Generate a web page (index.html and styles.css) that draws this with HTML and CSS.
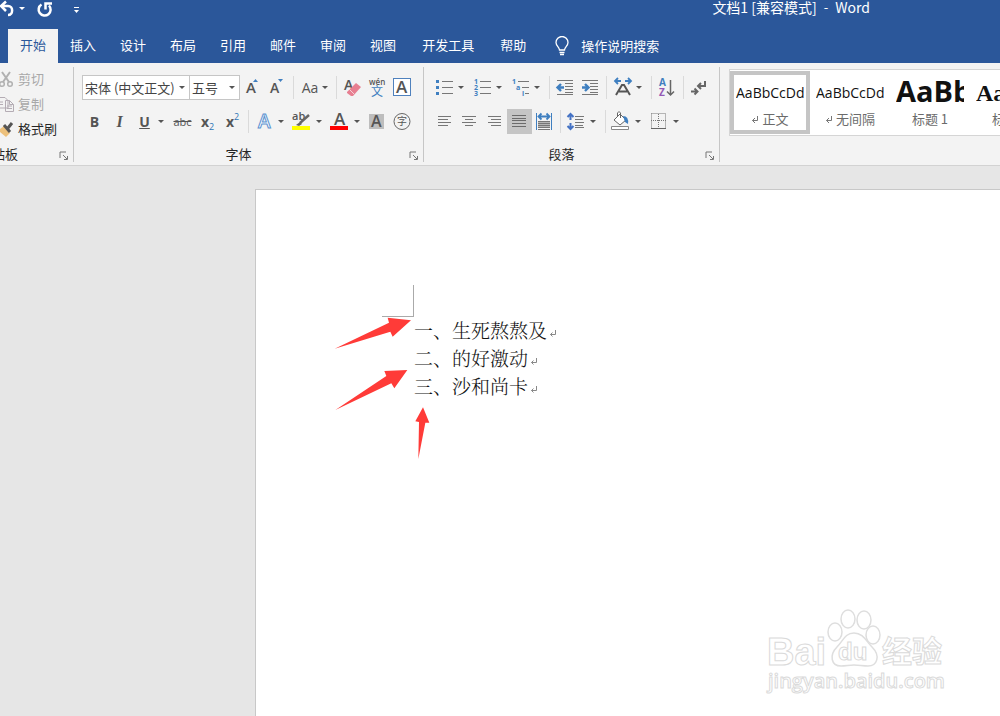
FILE: index.html
```
<!DOCTYPE html>
<html lang="zh-CN">
<head>
<meta charset="utf-8">
<title>文档1 [兼容模式] - Word</title>
<link rel="stylesheet" href="styles.css">
</head>
<body>
<header class="titlebar">
  <div class="quick">
    <button class="qbtn" aria-label="撤消"><svg width="34" height="20" viewBox="0 0 34 20"><path d="M6 1.500 1 6l5 5M1 6h7c5.500 0 5.500 9 0 9" fill="none" stroke="#fff" stroke-width="2.500"/><path d="M19 7h6l-3 3z" fill="#fff"/></svg></button>
    <button class="qbtn" aria-label="重复"><svg width="22" height="20" viewBox="0 0 22 20"><path d="M7.500 4.500A6 6 0 1 0 15 5.500M11.500 9.500V3.500H18" fill="none" stroke="#fff" stroke-width="2.500"/></svg></button>
    <button class="qbtn qmore" aria-label="自定义快速访问工具栏"><svg width="10" height="20" viewBox="0 0 10 20"><path d="M2 7.500h5" stroke="#fff"/><path d="M2 10h5l-2.500 3z" fill="#fff"/></svg></button>
  </div>
  <h1 class="title"><span>文档1 [兼容模式]</span><span>-</span><span>Word</span></h1>
</header>
<nav class="tabs">
  <button class="tab active">开始</button>
  <button class="tab">插入</button>
  <button class="tab">设计</button>
  <button class="tab">布局</button>
  <button class="tab">引用</button>
  <button class="tab">邮件</button>
  <button class="tab">审阅</button>
  <button class="tab">视图</button>
  <button class="tab wide">开发工具</button>
  <button class="tab">帮助</button>
  <label class="tell" for="tell"><svg width="16" height="20" viewBox="0 0 16 20"><path d="M5.500 14c0-3-3.500-4-3.500-7.500a6 6 0 0 1 12 0c0 3.500-3.500 4.500-3.500 7.500zM5.500 16.500h5M6 18.500h4" fill="none" stroke="#fff" stroke-width="1.300"/></svg></label>
  <input id="tell" class="tell-input" type="text" placeholder="操作说明搜索" aria-label="操作说明搜索">
</nav>
<section class="ribbon">
  <div class="group clipboard">
    <div class="clip-list">
      <button class="clip off"><svg width="15" height="18" viewBox="0 0 15 18"><path d="M2 2l7 10M10 2 3 12" stroke="#b1b1b1" stroke-width="2"/><circle cx="2" cy="14" r="2.300" fill="none" stroke="#b1b1b1" stroke-width="1.500"/><circle cx="10" cy="14" r="2.300" fill="none" stroke="#b1b1b1" stroke-width="1.500"/></svg>剪切</button>
      <button class="clip off"><svg width="15" height="18" viewBox="0 0 15 18"><path d="M0 2.500h5l3 3V13H0M5.500 5.500h4l4 4v7h-8zM9.500 5.500v4h4M7 11h5M7 13.500h5M0 7h3M0 9.500h3" fill="none" stroke="#b4acb4"/></svg>复制</button>
      <button class="clip"><svg width="15" height="18" viewBox="0 0 15 18"><path d="m0 9 4-3 6 7-4 4-6-5z" fill="#edc17c"/><path d="m4 5 6 7M8 8l4-5" stroke="#555" stroke-width="3"/></svg>格式刷</button>
    </div>
    <div class="caption"><span class="cap-text">剪贴板</span><button class="launch" aria-label="剪贴板选项"><svg width="10" height="10" viewBox="0 0 10 10"><path d="M1 7V1h6M4 4l4 4M8.500 5v3.500H5" fill="none" stroke="#777"/></svg></button></div>
  </div>

  <div class="group font">
    <div class="row">
      <span class="combo wide"><select aria-label="字体"><option>宋体 (中文正文)</option></select></span>
      <span class="combo"><select aria-label="字号"><option>五号</option></select></span>
      <button class="btn" aria-label="增大字号"><svg width="25" height="24" viewBox="0 0 25 24"><text x="6" y="17" class="g15">A</text><path d="M13 6h5l-2.500-3z" fill="#3f7fc0"/></svg></button>
      <button class="btn" aria-label="减小字号"><svg width="25" height="24" viewBox="0 0 25 24"><text x="5" y="17" class="g14">A</text><path d="M13 3h5l-2.500 3z" fill="#3f7fc0"/></svg></button>
      <i class="sep"></i>
      <button class="btn case" aria-label="更改大小写"><span>Aa</span><i class="caret"></i></button>
      <i class="sep"></i>
      <button class="btn" aria-label="清除格式"><svg width="25" height="24" viewBox="0 0 25 24"><text x="4" y="14" class="g14">A</text><path d="m7 16 9-9 5 4-8 9h-2l-4-3z" fill="#e77f91"/><path d="m9 13 5 5" stroke="#f7d0d6"/></svg></button>
      <button class="btn" aria-label="拼音指南"><svg width="25" height="24" viewBox="0 0 25 24"><text x="4" y="9" class="g8">wén</text><text x="6" y="20" class="g11">文</text></svg></button>
      <button class="btn" aria-label="字符边框"><svg width="25" height="24" viewBox="0 0 25 24"><rect x="3.500" y="2.500" width="17" height="17" fill="#fff" stroke="#4f81bd"/><text x="6" y="17" class="g17">A</text></svg></button>
    </div>
    <div class="row">
      <button class="btn bold">B</button>
      <button class="btn italic">I</button>
      <button class="btn split under"><span>U</span><i class="caret"></i></button>
      <button class="btn strike">abc</button>
      <button class="btn script">x<sub>2</sub></button>
      <button class="btn script">x<sup>2</sup></button>
      <i class="sep"></i>
      <button class="btn split" aria-label="文本效果"><svg width="25" height="24" viewBox="0 0 25 24"><text x="6" y="18" class="fx">A</text></svg><i class="caret"></i></button>
      <button class="btn split" aria-label="突出显示"><svg width="25" height="24" viewBox="0 0 25 24"><text x="2" y="10" class="g11d">ab</text><path d="m10 13 9-8" stroke="#666" stroke-width="2.500"/><path d="m6 15 4-3 2 2-3 2z" fill="#666"/><path d="M2 16h18v4H2z" fill="#ff0"/></svg><i class="caret"></i></button>
      <button class="btn split" aria-label="字体颜色"><svg width="25" height="24" viewBox="0 0 25 24"><text x="6" y="15" class="g17">A</text><path d="M2 16h18v4H2z" fill="red"/></svg><i class="caret"></i></button>
      <button class="btn" aria-label="字符底纹"><svg width="25" height="24" viewBox="0 0 25 24"><path d="M3 4h15v15H3z" fill="#bdbdbd"/><text x="5" y="17" class="g16">A</text></svg></button>
      <button class="btn" aria-label="带圈字符"><svg width="25" height="24" viewBox="0 0 25 24"><circle cx="11" cy="11.500" r="8" fill="none" stroke="#666"/><text x="6" y="15" class="g10">字</text></svg></button>
    </div>
    <div class="caption"><span class="cap-text">字体</span><button class="launch" aria-label="字体选项"><svg width="10" height="10" viewBox="0 0 10 10"><path d="M1 7V1h6M4 4l4 4M8.500 5v3.500H5" fill="none" stroke="#777"/></svg></button></div>
  </div>

  <div class="group para">
    <div class="row">
      <button class="btn split" aria-label="项目符号"><svg width="25" height="24" viewBox="0 0 25 24"><path d="M4 4h3v3H4zM4 10h3v3H4zM4 16h3v3H4z" fill="#3f7fc0"/><path d="M10 5.500h11M10 11.500h11M10 17.500h11" stroke="#777"/></svg><i class="caret"></i></button>
      <button class="btn split" aria-label="编号"><svg width="25" height="24" viewBox="0 0 25 24"><text x="4" y="8" class="n7">1</text><text x="4" y="14" class="n7">2</text><text x="4" y="20" class="n7">3</text><path d="M10 5.500h11M10 11.500h11M10 17.500h11" stroke="#777"/></svg><i class="caret"></i></button>
      <button class="btn split" aria-label="多级列表"><svg width="25" height="24" viewBox="0 0 25 24"><text x="4" y="8" class="n7">1</text><text x="8" y="14" class="n7">a</text><text x="14" y="20" class="n7">i</text><path d="M10 5.500h11M14 11.500h7M17 17.500h4" stroke="#777"/></svg><i class="caret"></i></button>
      <i class="sep"></i>
      <button class="btn" aria-label="减少缩进"><svg width="25" height="24" viewBox="0 0 25 24"><path d="M4 4.500h16M12 7.500h8M12 10.500h8M12 13.500h8M12 16.500h8M4 18.500h16" stroke="#777"/><path d="M11 11.500H5M8 8l-3.500 3.500L8 15" fill="none" stroke="#3f7fc0" stroke-width="2.400"/></svg></button>
      <button class="btn" aria-label="增加缩进"><svg width="25" height="24" viewBox="0 0 25 24"><path d="M4 4.500h16M12 7.500h8M12 10.500h8M12 13.500h8M12 16.500h8M4 18.500h16" stroke="#777"/><path d="M4 11.500h6M7 8l3.500 3.500L7 15" fill="none" stroke="#3f7fc0" stroke-width="2.400"/></svg></button>
      <i class="sep"></i>
      <button class="btn split" aria-label="中文版式"><svg width="25" height="24" viewBox="0 0 25 24"><path d="m6 19 6-10h2l6 10M9 15.500h8" fill="none" stroke="#555" stroke-width="2"/><path d="M5 5h6M8 2 5 5l3 3M15 5h6M18 2l3 3-3 3" fill="none" stroke="#3f7fc0" stroke-width="1.800"/></svg><i class="caret"></i></button>
      <i class="sep"></i>
      <button class="btn" aria-label="排序"><svg width="25" height="24" viewBox="0 0 25 24"><text x="4" y="10" class="az a">A</text><text x="4" y="20" class="az z">Z</text><path d="M15.500 4v15M12 15.500l3.500 3.500 3.500-3.500" fill="none" stroke="#666" stroke-width="1.500"/></svg></button>
      <i class="sep"></i>
      <button class="btn" aria-label="显示编辑标记"><svg width="25" height="24" viewBox="0 0 25 24"><path d="M18 5v5h-6M14 7l-3 3 3 3M4 15.500h6M7.500 12.500l3 3-3 3" fill="none" stroke="#666" stroke-width="2"/></svg></button>
    </div>
    <div class="row">
      <button class="btn" aria-label="左对齐"><svg width="25" height="24" viewBox="0 0 25 24"><path d="M6 6.500h13M6 9.500h10M6 12.500h13M6 15.500h10" stroke="#777"/></svg></button>
      <button class="btn" aria-label="居中"><svg width="25" height="24" viewBox="0 0 25 24"><path d="M5 6.500h14M8 9.500h8M5 12.500h14M8 15.500h8" stroke="#777"/></svg></button>
      <button class="btn" aria-label="右对齐"><svg width="25" height="24" viewBox="0 0 25 24"><path d="M6 6.500h13M9 9.500h10M6 12.500h13M9 15.500h10" stroke="#777"/></svg></button>
      <button class="btn pressed" aria-label="两端对齐"><svg width="25" height="24" viewBox="0 0 25 24"><path d="M5 5.500h14M5 8.500h14M5 10.500h14M5 13.500h14M5 16.500h14" stroke="#6b6b6b"/></svg></button>
      <button class="btn" aria-label="分散对齐"><svg width="25" height="24" viewBox="0 0 25 24"><path d="M4.500 3v17M19.500 3v17" stroke="#3f7fc0"/><path d="M7 6.500h10M9.500 3.500l-3 3 3 3M14.500 3.500l3 3-3 3" fill="none" stroke="#3f7fc0" stroke-width="1.800"/><path d="M6 11h12v7H6z" fill="#b5b5b5"/><path d="M6 11.500h12M6 13.500h12M6 15.500h12M6 17.500h12M6 19.500h12" stroke="#777"/></svg></button>
      <i class="sep"></i>
      <button class="btn split" aria-label="行距"><svg width="25" height="24" viewBox="0 0 25 24"><path d="M6.500 5v5M3.500 7l3-3 3 3M6.500 13v6M3.500 16l3 3 3-3" fill="none" stroke="#4472c4" stroke-width="2"/><path d="M11 6.500h9M11 9.500h8M11 12.500h9M11 15.500h8M11 17.500h9" stroke="#777"/></svg><i class="caret"></i></button>
      <i class="sep"></i>
      <button class="btn split" aria-label="底纹"><svg width="25" height="24" viewBox="0 0 25 24"><path d="m5 10 6-6 6 6-6 5zM8.500 7V3q1.500-3 3 0v5" fill="#fff" stroke="#666"/><path d="M14 6q6 0 5 8l-3-2z" fill="#3f7fc0"/><path d="M2.500 16.500h17v3h-17z" fill="#fff" stroke="#888"/></svg><i class="caret"></i></button>
      <button class="btn split" aria-label="边框"><svg width="25" height="24" viewBox="0 0 25 24"><path d="M4.500 3.500h14v15M4.500 3.500v15M11.500 4v14M4 10.500h15" fill="none" stroke="#777" stroke-dasharray="1 1"/><path d="M4 18.500h15" stroke="#666"/></svg><i class="caret"></i></button>
    </div>
    <div class="caption"><span class="cap-text">段落</span><button class="launch" aria-label="段落选项"><svg width="10" height="10" viewBox="0 0 10 10"><path d="M1 7V1h6M4 4l4 4M8.500 5v3.500H5" fill="none" stroke="#777"/></svg></button></div>
  </div>

  <div class="styles">
    <button class="style on"><span class="sample">AaBbCcDd</span><span class="sname"><svg width="8" height="9" viewBox="0 0 8 9"><path d="M6.500 1v4.500H1.500M4 3 1.500 5.500 4 8" fill="none" stroke="#777"/></svg>正文</span></button>
    <button class="style"><span class="sample">AaBbCcDd</span><span class="sname"><svg width="8" height="9" viewBox="0 0 8 9"><path d="M6.500 1v4.500H1.500M4 3 1.500 5.500 4 8" fill="none" stroke="#777"/></svg>无间隔</span></button>
    <button class="style"><span class="sample h1">AaBb</span><span class="sname">标题 1</span></button>
    <button class="style"><span class="sample h2">AaBb</span><span class="sname">标题 2</span></button>
  </div>
</section>
<main class="workspace">
  <article class="page">
    <div class="corner"></div>
    <p class="line">一、生死熬熬及<svg class="mark" width="8" height="9" viewBox="0 0 8 9"><path d="M6.500 1v4.500H1.500M3.500 3.500l-2 2 2 2" fill="none" stroke="#888"/></svg></p>
    <p class="line">二、的好激动<svg class="mark" width="8" height="9" viewBox="0 0 8 9"><path d="M6.500 1v4.500H1.500M3.500 3.500l-2 2 2 2" fill="none" stroke="#888"/></svg></p>
    <p class="line">三、沙和尚卡<svg class="mark" width="8" height="9" viewBox="0 0 8 9"><path d="M6.500 1v4.500H1.500M3.500 3.500l-2 2 2 2" fill="none" stroke="#888"/></svg></p>
    <svg class="arrows" width="260" height="200" viewBox="0 0 780 600" fill="#ff3b38"><path d="M44 239 207 161 203 146 273 154 218 203 211 188z"/><path d="M46 423 199 321 193 306 262 303 223 358 214 343z"/><path d="M295 570 297 459 286 457 309 415 328 461 316 461z"/></svg>
    <svg class="watermark" width="190" height="90" viewBox="0 0 190 90">
      <g fill="#fff" stroke="#dedede" stroke-width="1.500">
        <ellipse cx="75" cy="26" rx="7" ry="9"/>
        <ellipse cx="88" cy="13" rx="7" ry="9"/>
        <ellipse cx="104" cy="14" rx="7" ry="9"/>
        <ellipse cx="113" cy="29" rx="7" ry="9"/>
        <path d="M94 27c9 0 12 8 18 14 9 9 5 19-4 19-5 0-9-1-14-1s-8 1-13 1c-10 0-12-11-4-19 6-6 8-14 17-14z"/>
      </g>
      <text x="7" y="59" class="wm-logo">Bai</text>
      <text x="78" y="54" class="wm-du">du</text>
      <text x="122" y="56" class="wm-cn">经验</text>
      <text x="8" y="82" class="wm-url">jingyan.baidu.com</text>
    </svg>
  </article>
</main>
</body>
</html>
```
FILE: styles.css
```
* { box-sizing: border-box; }
body {
  margin: 0;
  min-height: 100vh;
  display: flex;
  flex-direction: column;
  overflow: hidden;
  background: #e6e6e6;
  color: #262626;
  font-family: "Noto Sans CJK SC", sans-serif;
  font-size: 13px;
}
button, select, input {
  font: inherit;
  color: inherit;
  border: 0;
  padding: 0;
  margin: 0;
  background: none;
  border-radius: 0;
}
svg { display: block; flex: none; }
text { font-family: "Open Sans", "Noto Sans CJK SC", sans-serif; fill: #555; }

.titlebar {
  display: flex;
  justify-content: space-between;
  height: 29px;
  padding-right: 130px;
  background: #2b579a;
  color: #fff;
}
.quick { display: flex; align-items: flex-start; }
.qbtn { height: 20px; }
.qmore { margin-left: 16px; }
.title {
  display: flex;
  gap: 7px;
  margin: 0;
  font-size: 13px;
  font-weight: 400;
  line-height: 14px;
}
.title span:first-child, .title span:last-child { font-size: 14px; }

.tabs {
  display: flex;
  height: 34px;
  padding-left: 8px;
  background: #2b579a;
  color: #fff;
}
.tab { padding: 0 12px 3px; white-space: nowrap; }
.tab.active { background: #f3f3f3; color: #2b579a; }
.tab.wide { padding: 0 14px 3px; }
.tell { display: flex; align-items: center; padding: 0 11px 0 16px; }
.tell-input { width: 120px; padding-bottom: 2px; }
.tell-input::placeholder { color: #fff; opacity: 1; }

.ribbon {
  display: flex;
  height: 103px;
  background: #f3f3f3;
  border-bottom: 1px solid #d2d2d2;
  overflow: hidden;
}
.group {
  display: flex;
  flex-direction: column;
  flex: none;
  margin: 4px 0 3px;
  padding: 8px 0 0 8px;
  border-right: 1px solid #c6c6c6;
}
.clipboard { width: 74px; padding: 0; overflow: hidden; }
.font { width: 350px; }
.para { width: 296px; }
.clip-list { display: flex; flex-direction: column; flex: 1; }
.clip {
  display: flex;
  align-items: center;
  gap: 3px;
  height: 25px;
  padding-bottom: 2px;
  white-space: nowrap;
}
.clip.off { color: #a8a8a8; }
.row { display: flex; align-items: center; height: 25px; margin-bottom: 9px; }
.caption {
  display: flex;
  justify-content: center;
  align-items: center;
  position: relative;
  height: 18px;
  margin-top: auto;
}
.clipboard .caption { justify-content: flex-start; }
.clipboard .cap-text { margin-left: -21px; }
.font .cap-text, .para .cap-text { margin-right: 28px; }
.launch { position: absolute; right: 4px; bottom: 1px; }

.combo {
  position: relative;
  width: 51px;
  height: 25px;
  background: #fff;
  border: 1px solid #c6c6c6;
}
.combo.wide { width: 107px; border-right: 0; }
.combo select {
  appearance: none;
  width: 100%;
  height: 23px;
  padding: 0 14px 0 2px;
  color: #444;
}
.combo::after {
  content: "";
  position: absolute;
  right: 4px;
  top: 10px;
  border: 3px solid transparent;
  border-top-color: #555;
  border-bottom: 0;
}
.btn {
  display: flex;
  align-items: center;
  justify-content: center;
  flex: none;
  width: 25px;
  height: 25px;
  color: #555;
  font-family: "Open Sans", sans-serif;
  font-size: 14px;
}
.btn.split { width: 38px; justify-content: flex-start; }
.btn.case { width: 36px; gap: 4px; }
.btn.pressed { background: #c5c5c5; }
.caret {
  flex: none;
  margin-left: 1px;
  border: 3px solid transparent;
  border-top-color: #555;
  border-bottom: 0;
}
.case .caret { margin-left: 0; }
.sep { flex: none; width: 1px; height: 23px; margin: 0 3px; background: #dadada; }
.bold { font-weight: 700; }
.italic { font-family: "Liberation Serif", serif; font-style: italic; font-weight: 700; font-size: 16px; }
.under span { width: 25px; text-align: center; font-weight: 700; text-decoration: underline; }
.strike { font-size: 11px; text-decoration: line-through; }
.script { font-weight: 700; }
.script sub, .script sup { font-size: 9px; font-weight: 400; color: #2e75b6; line-height: 9px; }
.script sub { align-self: flex-end; margin-bottom: 3px; }
.script sup { align-self: flex-start; margin-top: 3px; }

.g8 { font-size: 8px; font-weight: 600; }
.g10 { font-size: 10px; }
.g11 { font-size: 12px; fill: #3f7fc0; }
.g11d { font-size: 11px; font-weight: 600; }
.g14 { font-size: 14px; font-weight: 600; }
.g15 { font-size: 15px; font-weight: 600; }
.g16 { font-size: 16px; font-weight: 600; }
.g17 { font-size: 17px; font-weight: 600; }
.n7 { font-size: 7px; font-weight: 700; fill: #3f7fc0; }
.az { font-size: 10px; font-weight: 700; }
.az.a { fill: #3f7fc0; }
.az.z { fill: #9458b5; }
.fx { font-size: 19px; font-weight: 600; fill: #fff; stroke: #5b92d0; stroke-width: 1px; }

.styles {
  display: flex;
  flex: 1;
  height: 67px;
  margin: 6px 0 0 9px;
  padding: 1px 0;
  background: #fff;
  border: 1px solid #d5d5d5;
  border-right: 0;
  overflow: hidden;
}
.style {
  display: flex;
  flex-direction: column;
  align-items: center;
  flex: none;
  width: 80px;
  height: 63px;
  padding: 4px 2px 0;
  border: 4px solid transparent;
  overflow: hidden;
}
.style.on { border-color: #c5c5c5; }
.sample {
  width: 68px;
  height: 30px;
  overflow: hidden;
  color: #111;
  font-family: "Open Sans", sans-serif;
  font-size: 14px;
  line-height: 28px;
  text-align: left;
  white-space: nowrap;
}
.sample.h1 { font-size: 29px; font-weight: 700; line-height: 24px; }
.sample.h2 { font-family: "Liberation Serif", serif; font-size: 24px; font-weight: 700; }
.sname { display: flex; align-items: center; gap: 3px; color: #6b6b6b; line-height: 20px; white-space: nowrap; }

.workspace { flex: 1; display: flex; padding: 23px 0 0 255px; }
.page {
  position: relative;
  flex: 1;
  padding: 95px 0 0 126px;
  background: #fff;
  border: 1px solid #c8c8c8;
  border-right: 0;
  border-bottom: 0;
}
.corner {
  width: 32px;
  height: 32px;
  margin-bottom: -1px;
  border-right: 1px solid #aaa;
  border-bottom: 1px solid #aaa;
}
.line {
  display: flex;
  align-items: center;
  gap: 2px;
  margin: 0 0 0 32px;
  color: #111;
  font-family: "Noto Serif CJK SC", "Noto Sans CJK SC", serif;
  font-size: 19px;
  font-weight: 300;
  line-height: 28px;
}
.mark { margin-top: 6px; }
.arrows { position: absolute; left: 64px; top: 79px; }
.watermark { position: absolute; right: 50px; bottom: 20px; }
.watermark text { fill: #fff; stroke: #dadada; stroke-width: 1px; }
.watermark .wm-logo { font-family: "Liberation Sans", sans-serif; font-size: 38px; font-weight: 700; }
.watermark .wm-du { font-family: "Liberation Sans", sans-serif; font-size: 24px; font-weight: 700; }
.watermark .wm-cn { font-family: "Noto Sans CJK SC", sans-serif; font-size: 30px; font-weight: 700; }
.watermark .wm-url { font-size: 20px; font-weight: 600; }
```
